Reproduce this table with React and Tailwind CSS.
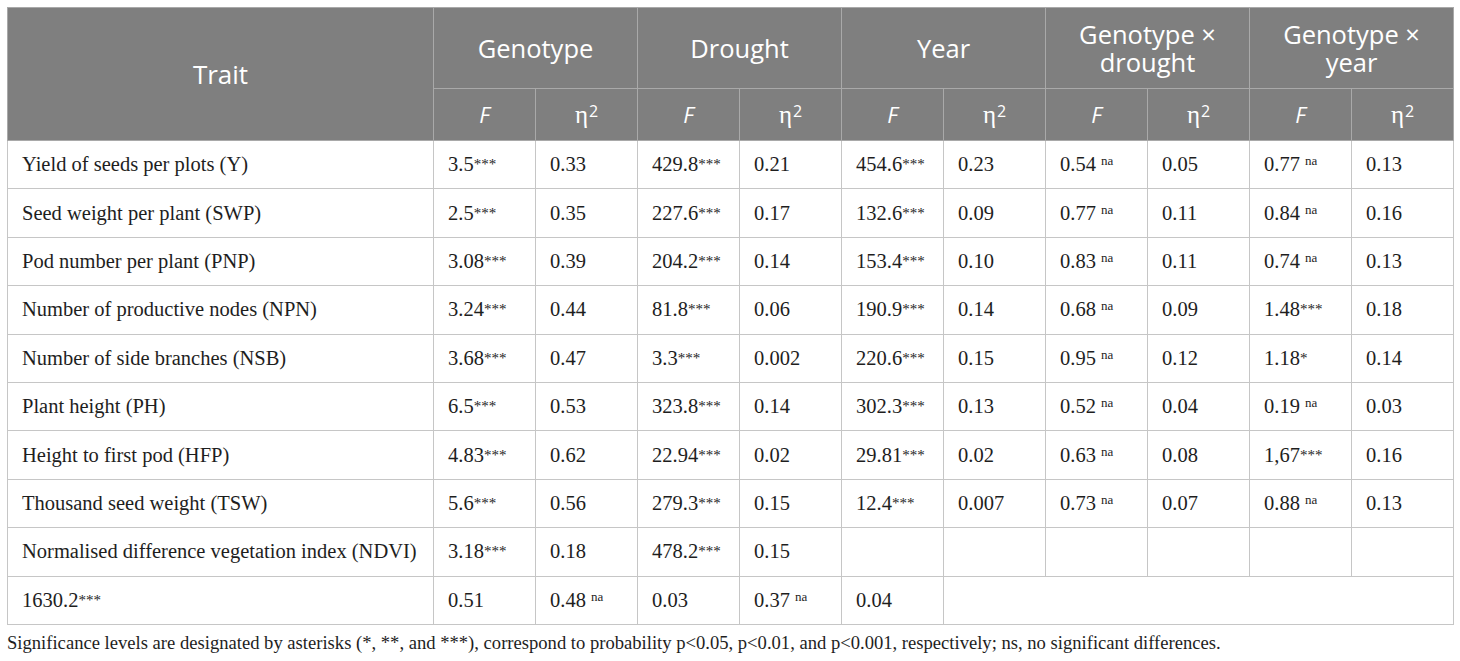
const rows = [
  ['Yield of seeds per plots (Y)', ['3.5', '***'], '0.33', ['429.8', '***'], '0.21', ['454.6', '***'], '0.23', ['0.54', 'na'], '0.05', ['0.77', 'na'], '0.13'],
  ['Seed weight per plant (SWP)', ['2.5', '***'], '0.35', ['227.6', '***'], '0.17', ['132.6', '***'], '0.09', ['0.77', 'na'], '0.11', ['0.84', 'na'], '0.16'],
  ['Pod number per plant (PNP)', ['3.08', '***'], '0.39', ['204.2', '***'], '0.14', ['153.4', '***'], '0.10', ['0.83', 'na'], '0.11', ['0.74', 'na'], '0.13'],
  ['Number of productive nodes (NPN)', ['3.24', '***'], '0.44', ['81.8', '***'], '0.06', ['190.9', '***'], '0.14', ['0.68', 'na'], '0.09', ['1.48', '***'], '0.18'],
  ['Number of side branches (NSB)', ['3.68', '***'], '0.47', ['3.3', '***'], '0.002', ['220.6', '***'], '0.15', ['0.95', 'na'], '0.12', ['1.18', '*'], '0.14'],
  ['Plant height (PH)', ['6.5', '***'], '0.53', ['323.8', '***'], '0.14', ['302.3', '***'], '0.13', ['0.52', 'na'], '0.04', ['0.19', 'na'], '0.03'],
  ['Height to first pod (HFP)', ['4.83', '***'], '0.62', ['22.94', '***'], '0.02', ['29.81', '***'], '0.02', ['0.63', 'na'], '0.08', ['1,67', '***'], '0.16'],
  ['Thousand seed weight (TSW)', ['5.6', '***'], '0.56', ['279.3', '***'], '0.15', ['12.4', '***'], '0.007', ['0.73', 'na'], '0.07', ['0.88', 'na'], '0.13'],
  ['Normalised difference vegetation index (NDVI)', ['3.18', '***'], '0.18', ['478.2', '***'], '0.15', '', '', '', '', '', ''],
]

function Val({ v }) {
  if (!Array.isArray(v)) return v
  const [n, s] = v
  if (s === 'na') {
    return (
      <>
        {n} <sup className="text-[13px] relative -top-[6px]">na</sup>
      </>
    )
  }
  return (
    <>
      {n}
      <sup className="text-[15px] relative -top-[2px]">{s}</sup>
    </>
  )
}

const td = 'border border-[#c6c6c6] pl-[14px] pr-1 align-middle'
const th = 'border border-[#a9a9a9] font-normal text-white text-center align-middle'

function Eta() {
  return (
    <span>
      <span className="text-[25px]" style={{ fontFamily: '"Liberation Serif", serif' }}>η</span>
      <sup className="text-[16px] relative -top-[6px] ml-[1px]">2</sup>
    </span>
  )
}

export default function App() {
  const groups = ['Genotype', 'Drought', 'Year', 'Genotype × drought', 'Genotype × year']
  return (
    <div className="w-[1460px] h-[661px] bg-white text-[#1e1e1e]" style={{ fontFamily: '"Liberation Serif", serif' }}>
      <div className="pt-[7px] pl-[7px]">
        <table className="table-fixed border-collapse w-[1446px] text-[20.5px]">
          <colgroup>
            <col className="w-[426px]" />
            {Array.from({ length: 10 }).map((_, i) => (
              <col key={i} className="w-[102px]" />
            ))}
          </colgroup>
          <thead className="bg-[#7f7f7f]" style={{ fontFamily: '"Open Sans", sans-serif' }}>
            <tr className="h-[81px]">
              <th rowSpan={2} className={th + ' text-[26px]'}>Trait</th>
              {groups.map((g) => (
                <th key={g} colSpan={2} className={th + ' text-[25.5px] leading-[28px] px-6'}>
                  {g}
                </th>
              ))}
            </tr>
            <tr className="h-[52px]">
              {groups.map((g) => (
                <>
                  <th key={g + 'f'} className={th + ' text-[22px] italic'}>F</th>
                  <th key={g + 'e'} className={th + ' text-[22px]'}><Eta /></th>
                </>
              ))}
            </tr>
          </thead>
          <tbody>
            {rows.map((r, i) => (
              <tr key={i} className="h-[48.4px]">
                {r.map((c, j) => (
                  <td key={j} className={td}>
                    <Val v={c} />
                  </td>
                ))}
              </tr>
            ))}
            <tr className="h-[48.4px]">
              <td className={td}><Val v={['1630.2', '***']} /></td>
              <td className={td}>0.51</td>
              <td className={td}><Val v={['0.48', 'na']} /></td>
              <td className={td}>0.03</td>
              <td className={td}><Val v={['0.37', 'na']} /></td>
              <td className={td}>0.04</td>
              <td colSpan={5} className={td}></td>
            </tr>
          </tbody>
        </table>
        <p className="mt-[6px] text-[18.6px] leading-[24px]">
          Significance levels are designated by asterisks (*, **, and ***), correspond to probability p&lt;0.05, p&lt;0.01, and p&lt;0.001, respectively; ns, no significant differences.
        </p>
      </div>
    </div>
  )
}
